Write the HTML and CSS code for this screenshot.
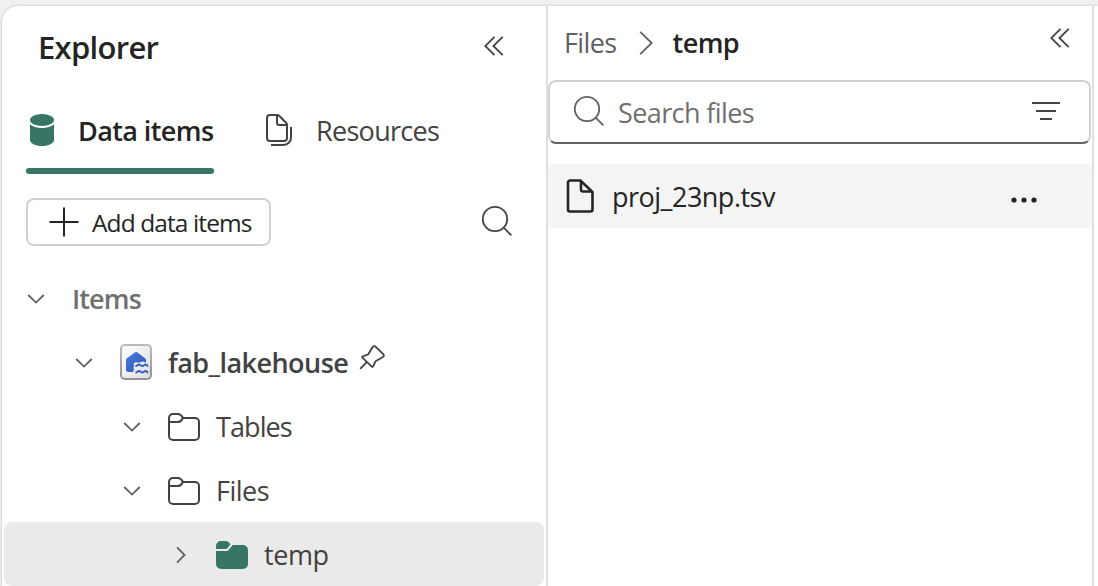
FILE: index.html
```html
<!DOCTYPE html>
<html lang="en">
<head>
<meta charset="utf-8">
<title>Explorer</title>
<link rel="stylesheet" href="styles.css">
</head>
<body>
<div class="shell">
  <section class="explorer">
    <header class="explorer-head">
      <h1 class="title">Explorer</h1>
      <svg class="collapse" width="20" height="20" viewBox="0 0 20 20"><path d="M10.500 .8 1.200 10l9.300 9.200M18.700 .8 9.400 10l9.300 9.200"/></svg>
    </header>
    <nav class="tabs">
      <div class="tab tab-active">
        <svg class="db" width="24" height="32" viewBox="0 0 24 32"><ellipse cx="12" cy="6" rx="12" ry="6"/><path d="M0 10.200C2.400 12.600 7 13.900 12 13.900s9.600-1.300 12-3.700V26c0 3.300-5.400 6-12 6S0 29.300 0 26Z"/></svg>
        <span class="t-data">Data items</span>
      </div>
      <div class="tab">
        <svg class="docs" width="28" height="34" viewBox="0 0 28 34"><path d="M5 2h7.200c.8 0 1.400.3 2 .8l6.900 6.900c.6.600.9 1.300.9 2.100V25a3 3 0 0 1-3 3H5a3 3 0 0 1-3-3V5a3 3 0 0 1 3-3Z"/><path d="M12 2v7.800c0 1.300.8 2.200 2.200 2.200H22M6 32h12.500c4.200 0 7.500-3.300 7.500-7.500V14"/></svg>
        <span class="t-res">Resources</span>
      </div>
    </nav>
    <div class="toolbar">
      <button class="add">
        <svg class="plus" width="30" height="30" viewBox="0 0 30 30"><path d="M15 .5v29M.5 15h29"/></svg>
        <span class="t-add">Add data items</span>
      </button>
      <svg class="search" width="32" height="32" viewBox="0 0 32 32"><circle cx="14" cy="14" r="12.200"/><path d="m22.700 22.700 7.600 7.600"/></svg>
    </div>
    <ul class="tree">
      <li class="row lv0">
        <svg class="chev" width="18" height="10" viewBox="0 0 18 10"><path d="m1.300 1 7.700 7.600L16.700 1"/></svg>
        <span class="t-items">Items</span>
      </li>
      <li class="row lv1">
        <svg class="chev" width="18" height="10" viewBox="0 0 18 10"><path d="m1.300 1 7.700 7.600L16.700 1"/></svg>
        <svg class="lake" width="32" height="36" viewBox="0 0 32 36">
          <defs>
            <linearGradient id="card" x1="0" y1="0" x2="1" y2="1"><stop offset="0" stop-color="#fff"/><stop offset="1" stop-color="#dedede"/></linearGradient>
            <linearGradient id="rim" x1="0" y1="0" x2="0" y2="1"><stop offset="0" stop-color="#bbb"/><stop offset="1" stop-color="#929292"/></linearGradient>
            <linearGradient id="house" x1="0" y1="0" x2="1" y2="1"><stop offset="0" stop-color="#4a7ade"/><stop offset="1" stop-color="#2c57b8"/></linearGradient>
          </defs>
          <rect x="1" y="1" width="30" height="34" rx="4" fill="url(#card)" stroke="url(#rim)" stroke-width="2"/>
          <path fill="url(#house)" d="M14.400 8.700a2.600 2.600 0 0 1 3.400 0l7.200 5.600c.6.500 1 1.200 1 2v2.200c-1.300 0-1.800-1-3.400-1-1.500 0-2.200 1.100-3.700 1.100-1.500 0-2.700-.8-4.300.1-1.200.700-1.300 2.400-.2 3.300-1.500 1-1.400 3 .1 3.600-1 .6-1.300 1.500-1.200 2.400H8.500A2.500 2.500 0 0 1 6 25.500v-9.200c0-.8.4-1.500 1-2Z"/>
          <path fill="none" stroke="#315fc4" stroke-width="2" d="M15.500 22c2 0 2-1.400 3.500-1.400s1.800 1.400 3.300 1.400 1.800-1.400 3.200-1.400S27 22 28.300 22M15.500 28.500c2 0 2-1.400 3.500-1.400s1.800 1.400 3.300 1.400 1.800-1.400 3.200-1.400 1.500 1.400 2.800 1.400"/>
        </svg>
        <span class="t-lake">fab_lakehouse</span>
        <svg class="pin" width="26" height="26" viewBox="0 0 26 26"><path d="m1.200 24.800 6.300-6.500M3.400 13.700l9.400 8.900c.5.500 1.200.3 1.400-.3l2.200-5 7.500-4.200c1.100-.7 1.300-2 .4-2.900l-7.900-7.600c-.9-.9-2.200-.7-2.800.4L9.300 10.300l-5.500 2c-.8.2-.9.900-.4 1.400Z"/></svg>
      </li>
      <li class="row lv2">
        <svg class="chev" width="18" height="10" viewBox="0 0 18 10"><path d="m1.300 1 7.700 7.600L16.700 1"/></svg>
        <svg class="folder" width="32" height="28" viewBox="0 0 32 28"><path d="M1 9V5a4 4 0 0 1 4-4h5c2.300 0 3.700 1.600 5 4h12a4 4 0 0 1 4 4v14a4 4 0 0 1-4 4H5a4 4 0 0 1-4-4V9h9c2.300 0 3.700-1.600 5-4"/></svg>
        <span class="t-tables">Tables</span>
      </li>
      <li class="row lv2">
        <svg class="chev" width="18" height="10" viewBox="0 0 18 10"><path d="m1.300 1 7.700 7.600L16.700 1"/></svg>
        <svg class="folder" width="32" height="28" viewBox="0 0 32 28"><path d="M1 9V5a4 4 0 0 1 4-4h5c2.300 0 3.700 1.600 5 4h12a4 4 0 0 1 4 4v14a4 4 0 0 1-4 4H5a4 4 0 0 1-4-4V9h9c2.300 0 3.700-1.600 5-4"/></svg>
        <span class="t-files">Files</span>
      </li>
      <li class="row lv3 selected">
        <svg class="chev" width="10" height="18" viewBox="0 0 10 18"><path d="M1 1.300 8.600 9 1 16.700"/></svg>
        <svg class="folder-full" width="32" height="28" viewBox="0 0 32 28"><path d="M0 8V5a5 5 0 0 1 5-5h4.600c1 0 2 .4 2.700 1l2.200 2.200-2.900 3.900c-.5.600-1.200.9-2 .9Z"/><path d="M0 10h9.700c1.300 0 2.500-.5 3.300-1.500L16.700 4H27a5 5 0 0 1 5 5v14a5 5 0 0 1-5 5H5a5 5 0 0 1-5-5Z"/></svg>
        <span class="t-temp">temp</span>
      </li>
    </ul>
  </section>
  <section class="files">
    <header class="files-head">
      <div class="crumbs">
        <span class="t-crumb">Files</span>
        <svg class="crumb-sep" width="14" height="24" viewBox="0 0 14 24"><path d="M1.200 .8 12.700 12 1.200 23.200"/></svg>
        <span class="t-current">temp</span>
      </div>
      <svg class="collapse" width="20" height="20" viewBox="0 0 20 20"><path d="M10.500 .8 1.200 10l9.300 9.200M18.700 .8 9.400 10l9.300 9.200"/></svg>
    </header>
    <div class="searchbox">
      <svg class="search search-grey" width="32" height="32" viewBox="0 0 32 32"><circle cx="14" cy="14" r="12.200"/><path d="m22.700 22.700 7.600 7.600"/></svg>
      <span class="t-search">Search files</span>
      <svg class="filter" width="28" height="18" viewBox="0 0 28 18"><path d="M0 1h28M4 9h20M8 17h12"/></svg>
    </div>
    <div class="file">
      <svg class="doc" width="28" height="34" viewBox="0 0 28 34"><path d="M4 1.500h10.500L26.500 13v17.500a2 2 0 0 1-2 2H4a2 2 0 0 1-2-2v-27a2 2 0 0 1 2-2Z"/><path d="M15 2v8.500a2 2 0 0 0 2 2h9"/></svg>
      <span class="t-file">proj_23np.tsv</span>
      <svg class="more" width="26" height="6" viewBox="0 0 26 6"><circle cx="3" cy="3" r="2.600"/><circle cx="13" cy="3" r="2.600"/><circle cx="23" cy="3" r="2.600"/></svg>
    </div>
  </section>
</div>
</body>
</html>
```
FILE: styles.css
```css
* { box-sizing: border-box; }
body {
  margin: 0;
  height: 586px;
  overflow: hidden;
  padding: 6px 0 0 2px;
  background: #f1f1f1;
  font-family: "Open Sans", "Noto Sans", sans-serif;
  font-size: 27px;
  line-height: 36px;
  color: #424242;
  white-space: nowrap;
}
.shell {
  display: flex;
  height: 580px;
  background: #fff;
  border-top-left-radius: 16px;
  box-shadow: 0 0 3px rgba(0, 0, 0, .24);
}
svg { flex: none; display: block; fill: none; stroke: #424242; stroke-width: 1.800; }
.explorer { width: 546px; border-right: 2px solid #e0e0e0; }
.explorer-head { display: flex; justify-content: space-between; align-items: center; height: 84px; padding: 0 42px 4px 36px; }
.title { margin: 2px 0 0; font-size: 31px; font-weight: 600; letter-spacing: -.7px; color: #242424; }
.tabs { display: flex; gap: 51px; padding-left: 24px; height: 84px; }
.tab { display: flex; align-items: center; height: 84px; padding-bottom: 5px; }
.tab-active { position: relative; width: 188px; padding-left: 4px; gap: 24px; color: #242424; font-weight: 600; }
.tab-active::after { content: ""; position: absolute; left: 0; bottom: 0; width: 188px; height: 6px; border-radius: 3px; background: #377565; }
.t-data { margin-top: 2px; letter-spacing: -.6px; }
.t-res { margin-top: 2px; letter-spacing: -.7px; }
.db { fill: #377565; stroke: none; }
.docs { stroke-width: 2; margin-right: 23px; }
.toolbar { display: flex; justify-content: space-between; align-items: center; height: 48px; margin: 24px 33px 0 24px; }
.toolbar .search { margin-top: -2px; }
.add { display: flex; align-items: center; width: 245px; height: 48px; padding: 0 0 0 21px; gap: 13px; border: 2px solid #d1d1d1; border-radius: 8px; background: #fff; font: inherit; font-size: 24.500px; letter-spacing: -.9px; color: #242424; }
.t-add { margin-top: 2px; }
.plus { stroke: #242424; stroke-width: 2; }
.tree { list-style: none; margin: 20px 0 0; padding: 0; }
.row { display: flex; align-items: center; height: 64px; padding-top: 2px; }
.chev { stroke: #616161; }
.lv0 { padding-left: 25px; }
.lv1 { padding-left: 73px; }
.lv2 { padding-left: 121px; }
.lv3 { margin: 0 2px; padding-left: 172px; }
.selected { background: #eaeaea; border-radius: 8px; }
.t-items { margin-left: 27px; font-weight: 600; letter-spacing: -.9px; color: #707070; }
.lake { margin: -2px 0 0 27px; stroke: none; }
.t-lake { margin-left: 16px; font-weight: 600; letter-spacing: -.55px; }
.pin { margin: -12px 0 0 11px; }
.folder { margin-left: 27px; stroke-width: 2; }
.t-tables, .t-files, .t-temp { margin-left: 16px; }
.t-tables { letter-spacing: -.9px; }
.t-files { letter-spacing: -.5px; }
.t-temp { letter-spacing: -.4px; }
.folder-full { margin-left: 30px; fill: #377565; stroke: none; }
.files { width: 546px; border-right: 2px solid #e0e0e0; }
.files-head { display: flex; justify-content: space-between; height: 74px; padding: 19px 22px 0 16px; }
.files-head .collapse { margin-top: 3px; }
.crumbs { display: flex; align-items: center; height: 36px; }
.t-crumb { letter-spacing: -.6px; color: #616161; }
.crumb-sep { margin: 0 20px 0 22px; stroke: #616161; }
.t-current { font-weight: 600; letter-spacing: -.6px; color: #242424; }
.searchbox { display: flex; align-items: center; width: 543px; height: 64px; padding: 0 29px 2px 23px; border: 2px solid #d1d1d1; border-bottom-color: #616161; border-radius: 8px; }
.search-grey { stroke: #616161; }
.t-search { margin: 4px auto 0 13px; letter-spacing: -.6px; color: #707070; }
.filter { stroke-width: 2; }
.file { display: flex; align-items: center; height: 64px; margin-top: 20px; padding: 0 55px 0 18px; border-radius: 8px; background: #f4f4f4; color: #242424; }
.doc { stroke: #242424; stroke-width: 2.600; }
.t-file { margin: 2px auto 0 18px; letter-spacing: -.5px; }
.more { margin-top: 8px; fill: #242424; stroke: none; }
```
